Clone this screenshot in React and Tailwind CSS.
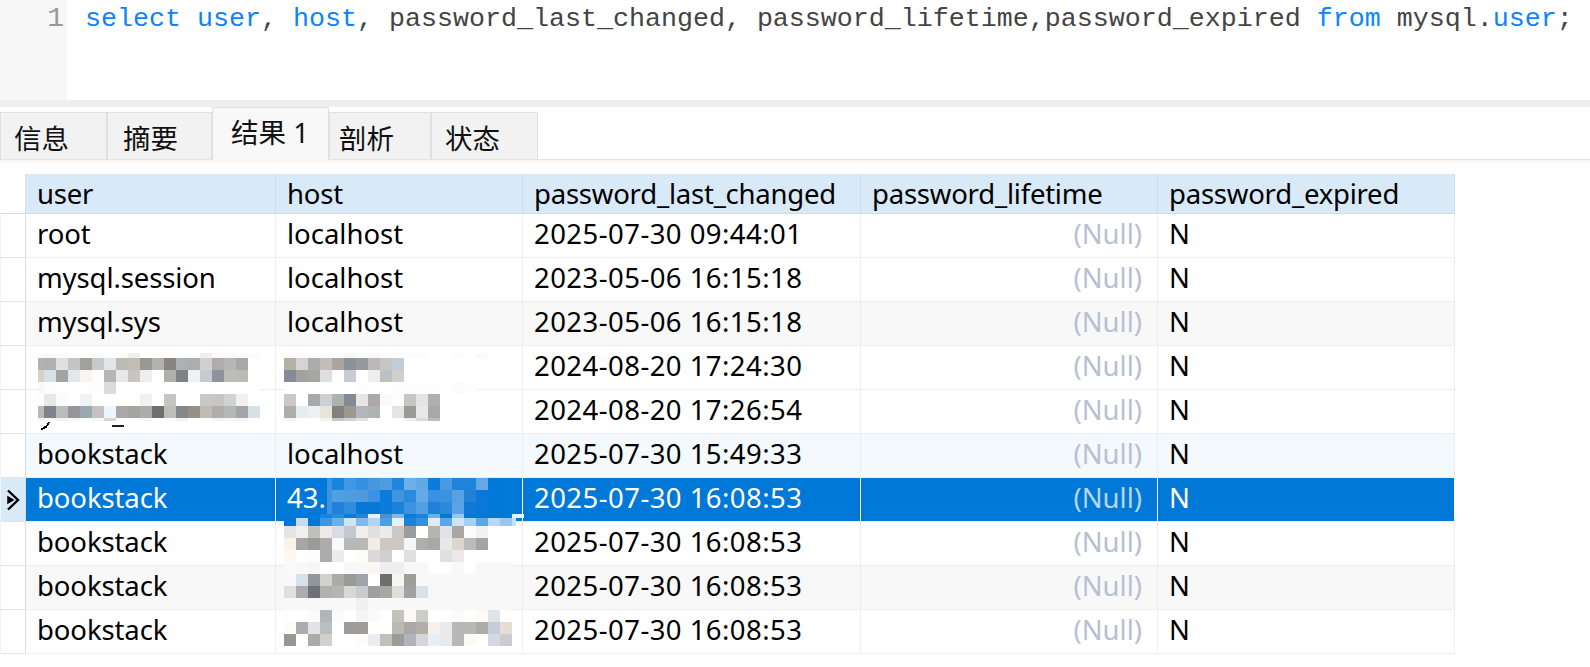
import React from 'react';

const COLS = ['w-[250px]', 'w-[247px]', 'w-[338px]', 'w-[297px]', 'w-[297px]'];
const HEAD = ['user', 'host', 'password_last_changed', 'password_lifetime', 'password_expired'];

const ROWS = [
    { user: 'root', host: 'localhost', time: '2025-07-30 09:44:01', bg: 'bg-white' },
    { user: 'mysql.session', host: 'localhost', time: '2023-05-06 16:15:18', bg: 'bg-white' },
    { user: 'mysql.sys', host: 'localhost', time: '2023-05-06 16:15:18', bg: 'bg-[#f8f8f8]' },
    { user: '', host: '', time: '2024-08-20 17:24:30', bg: 'bg-white' },
    { user: '', host: '', time: '2024-08-20 17:26:54', bg: 'bg-white' },
    { user: 'bookstack', host: 'localhost', time: '2025-07-30 15:49:33', bg: 'bg-[#f4f9fe]' },
    { user: 'bookstack', host: '43.', time: '2025-07-30 16:08:53', selected: true },
    { user: 'bookstack', host: '', time: '2025-07-30 16:08:53', bg: 'bg-white' },
    { user: 'bookstack', host: '', time: '2025-07-30 16:08:53', bg: 'bg-[#f8f8f8]' },
    { user: 'bookstack', host: '', time: '2025-07-30 16:08:53', bg: 'bg-white' },
];

const TABS = [
    { label: '信息', w: 'w-[107px] pl-[13px]' },
    { label: '摘要', w: 'w-[105px] pl-[15px]' },
    { label: '结果 1', w: 'w-[117px] pl-[18px]', active: true },
    { label: '剖析', w: 'w-[102px] pl-[9px]' },
    { label: '状态', w: 'w-[107px] pl-[13px]' },
];

// blurred-out parts of the screenshot: [x, y, h, colours, width of first cell]
const W = 'ffffff';
const BLUR = [
    [38, 353, 5, ['fbfbfb', 'f8f8f8', 'fbfbfb', W, W, 'fbfbfb', W, W, 'eef0ee', W, W, W, W, W, 'f0f0f0', 'fbfbfb', 'fbfbfb', 'fbfbfb', 'fbfbfb'], 6],
    [38, 358, 12, ['b3b4b2', 'adb1b2', 'e0e0e0', 'c3c4c6', 'a0a19b', 'c8c9cb', 'e2e6ea', 'bcbbb5', 'c4bcb2', '979993', 'b3b1b2', '888480', 'adb1b5', 'adadad', 'd0d0d0', 'b0acac', 'b5b7b4', 'a8a8a6', W], 6],
    [38, 370, 12, ['d9d0c8', 'd8e0e8', 'a0a4a4', 'e4e6e9', 'f6f5f2', 'fdfdfd', 'b4b6b8', 'e8e8e8', 'c8c4c0', 'eeeeee', W, 'b2b0ac', '7f8184', 'f0f1f3', 'c4ccd2', '8f9298', 'bdbdb8', 'bcbab6', W], 6],
    [38, 382, 12, ['f8f8f8', 'fdfdfd', W, 'fefefe', 'fefefe', 'fdfdfd', 'dcdbd9', 'fefefe', 'fefefe', 'fefefe', 'fefefe', 'fefefe', 'fefefe', 'fefefe', 'fefefe', 'fefefe', 'fefefe', 'fefefe', W], 6],
    [38, 394, 12, [W, 'e8e8e4', 'fbfbfb', W, 'f2f2f2', W, W, W, W, 'f1f1f1', W, 'c4c4c0', W, W, 'c8c8c8', 'c6c6c6', 'd0d2d0', 'f2f0ee', W], 6],
    [38, 406, 12, ['bcb8b4', '7f838c', 'bcbcbc', '96969c', '9aa8b0', 'c4c2c2', 'eef6fd', 'a8a8a8', 'a6a4a0', 'acaca8', '706e6e', 'bcbebb', '85878b', '989088', 'c0bcb4', 'b0aeac', 'b4b8b6', 'a4a4aa', 'd8e0e8'], 6],
    [38, 418, 3, ['f4f4f4', 'f8f8f8', 'f8f0f4', 'f8f8f8', W, 'f4f8f4', 'd8d8d8', W, W, 'f4f8f4', W, W, 'f8f0f4', W, W, 'f8f0f4', 'f4f8f4', 'f4f4f8', W], 6],

    [284, 353, 5, ['fcfcfc', 'fcfcfc', 'fcfcfc', 'fcfcfc', 'fcfcfc', 'f8f8f8', 'fcfcfc', 'f8f8f8', W, 'fcfcfc', 'fcfcfc', 'fcfcfc', W, W, 'fcfcfc', W, 'fafafa']],
    [284, 358, 12, ['b4b0a4', 'd4d4d2', 'acacac', 'c4bcb6', 'aca49e', '8e9296', '969a9e', 'bcb8b6', 'c8c6c4', 'c0ccd6']],
    [284, 370, 12, ['848c96', 'a0a2a4', 'a8a6a2', 'dde0de', W, 'c8ccd2', W, 'f0eeec', 'bcc2c2', 'd0cfcb']],
    [284, 382, 12, ['fefefe', 'fefefe', 'fefefe', 'fefefe', 'fefefe', W, 'fdfdfd', 'fefefe', 'fefefe', 'fdfdfd', 'fdfdfd', 'fdfdfd', 'fdfdfd', W, 'fcfcfc', 'fdfdfd']],
    [284, 394, 12, ['ccc8c4', W, 'a6a8ac', 'ccd0d4', 'aeb2ae', '848a94', 'e8e6e4', 'aca8a6', 'f8fafc', 'fcffff', 'c8c6c4', 'e4e4e4', 'aeb0b0']],
    [284, 406, 12, ['b0aca8', 'e4ecf4', 'f0f0f0', 'e4e6dc', '84807c', '9c9890', 'b4b4bc', 'b0b4b2', W, 'e4e4e0', '9c9a96', 'e8e8e8', 'a8a8a8']],
    [284, 418, 3, ['f4f4f4', W, W, 'f4f4f0', 'c8c4c8', 'd8d0d8', 'e0e0e4', W, W, W, 'f0f0e8', 'e0d8e0', 'bcbcbc']],

    [327, 478, 12, ['3d93e0', '1a84dc', '4097e3', '3590e2', '4697e0', '509ce2', '1f86dc', '6cb0ea', '60a8e8', '0a7ddb', '4a9ae2', '1f85dc', '1f85dc', '64a8e6'], 5],
    [327, 490, 12, ['3d93e0', '4f9fe5', '4f9ce3', '4c9ae2', '3a92e0', '0a7ddb', '3f95e2', '2a8ade', '62aaea', '3892e0', '3a93e0', '55a2e6', '2480d4', '0a78d8'], 5],
    [327, 502, 12, ['3d93e0', '2080dc', '308ce0', '0578d8', '0678d8', '0c7cd9', '1a82da', '3a92e0', '52a0e4', '2080dc', '2a8ade', '5aa4e6', '1278d8', '0a78d8'], 5],
    [320, 514, 4, ['1a84dc', '2a8ade', '0a7ddb', '1f86dc', 'e8f2fb', '3f95e2', '80b8ec', '0a7ddb', '1a84dc', '70b0ea', '0078d7', '9ac6ee', '0078d7', '0078d7', '0078d7', '0078d7', 'e8f2fb']],
    [284, 518, 8, ['0078d7', 'c4def5', '0078d7', '3d96e3', '6cb0ea', 'd0e4f6', '80b8ec', 'b4d4f2', '509fe4', 'e4f0fa', '1a82da', '3490e0', 'e0ecf8', '5ca6e6', 'cfe3f6', 'a8cef2', '5ca6e6', 'b8d8f4', '9ac6ee']],
    [512, 518, 8, ['c8e0f6'], 4],
    [284, 526, 12, ['e4e4e4', 'f0f0f0', 'c0c0bc', 'ecebe8', 'dcdce0', 'c2c8d2', 'f2f0ee', 'e0e0e0', 'ececee', 'ccc8c4', '9c9c9e', W, 'b4b4b0', 'e0e4e6', 'aaa6a4', 'fbfbfb', 'f2f2f4', W, W]],
    [284, 538, 12, ['fcf2e8', 'a8a6a4', '9c9a9a', 'aeacaa', 'f8fafc', 'b8b8b8', 'b8b8b8', 'f0ece6', 'd0c8c0', 'ccc8c2', 'f2f6f6', 'aeaeaa', 'a8a8a4', 'e8e8e6', 'dcd6ce', 'b8bcbe', 'a8a4a2', W, W]],
    [284, 550, 12, ['fef8f2', 'fefefe', 'fdfdfd', 'acacac', 'ececee', W, 'fdfbf6', 'dcdad6', 'd0d0d2', W, 'e0e0e0', W, W, 'e0e0e2', 'ece8ea', W, W, W, W]],
    [284, 562, 12, ['fafafa', 'f8f8f8', 'f6f6f6', W, W, 'f8f8f8', 'f8f8f8', 'f8f8f0', 'eeeeee', 'eeeeee', 'f8f8f8', 'f8f8f8', W, W, 'f8f8f8', W, 'f8f8f8', 'f8f8f8', 'f8f8f8']],
    [284, 574, 12, ['f8f8f8', 'd8e2ec', '90969a', 'd4d0cc', 'a8acaa', '9c9a96', 'a0a4a8', W, '6e6e6e', 'f6f5f2', 'a09e9a', 'f8f8f8', 'f8f8f8', 'f8f8f8', 'f8f8f8', 'f8f8f8', 'f8f8f8', 'f8f8f8', 'f8f8f8']],
    [284, 586, 12, ['e0e0e0', 'acacb0', '6e7276', 'b0b0ac', 'b8b4b0', 'd8d8d8', 'c8cccc', '9ca0a2', 'aaa6a2', 'dededa', 'a0a2a6', 'dce2ec', 'f8f8f8', 'f8f8f8', 'f8f8f8', 'f8f8f8', 'f8f8f8', 'f8f8f8', 'f8f8f8']],
    [284, 598, 12, ['f8f8f8', 'f8f8f8', 'f8f8f8', 'f8f8f8', 'f8f8f8', 'f8f8f8', 'f0f0f0', 'f8f8f8', 'f8f8f8', 'f8f8f8', 'f8f8f8', 'f8f8f8', 'f8f8f8', 'f8f8f8', 'f8f8f8', 'f8f8f8', 'f8f8f8', 'f8f8f8', 'f8f8f8']],
    [284, 610, 12, [W, W, 'fbfbfb', 'b0b6b6', 'fbfbfb', W, 'f5f5f5', 'fafafa', W, 'c4c2bc', 'fcfaf6', 'ccccca', W, W, 'fbfbfb', W, 'fdfbf8', 'e0e4e6', W]],
    [284, 622, 12, ['fdfaf7', 'acacac', 'e0e4e4', 'b8bec2', W, '9c9c9a', 'a09c98', W, W, 'bcb8b2', 'a8a8a8', 'b4aea8', 'f4f0ee', 'e8eaec', 'b8b8b8', 'b8b8b8', 'acaca8', 'c8ccd8', 'e6ded4']],
    [284, 634, 12, ['9a9692', W, 'acaaa6', 'd0d0cc', W, W, 'fcfcfc', 'e8eef4', 'c0c0ba', '9c9c98', 'b0b4bc', 'd4d6da', 'e6eef6', 'eaeaec', 'b8b8b8', 'fef9f2', W, 'd4d8e4', 'ccccd0']],
];

const Cell = ({ className, children }) => (
    <div className={`shrink-0 h-full flex items-center pl-[11px] pr-[15px] border-r whitespace-nowrap ${className}`}>
        {children}
    </div>
);

const DataRow = ({ row }) => {
    const line = row.selected ? 'border-white' : 'border-[#eeeeee]';
    const text = row.selected ? 'text-white' : 'text-black';
    return (
        <div className="flex h-[44px]">
            <div className={`w-[26px] shrink-0 border-b border-l border-r border-l-[#f2f2f2] border-b-[#e4e4e4] border-r-[#dddddd] flex items-center justify-center ${row.selected ? 'bg-[#d8e9f7]' : 'bg-white'}`}>
                {row.selected && (
                    <svg width="16" height="24" viewBox="0 0 16 24">
                        <path d="M3 9l5 3-5 3z" fill="#000" stroke="#000" strokeWidth="1.5" />
                        <path d="M3 2.5 13 12 3 21.5" fill="none" stroke="#000" strokeWidth="2.4" />
                    </svg>
                )}
            </div>
            <div className={`flex border-b border-[#eeeeee] ${row.selected ? 'bg-[#0078d7]' : row.bg}`}>
                <Cell className={`${COLS[0]} ${line} ${text} pb-[3px] tracking-[-0.1px]`}>{row.user}</Cell>
                <Cell className={`${COLS[1]} ${line} ${text} pb-[3px]`}>{row.host}</Cell>
                <Cell className={`${COLS[2]} ${line} ${text} pb-[3px] tracking-[0.45px]`}>{row.time}</Cell>
                <Cell className={`${COLS[3]} ${line} pb-[3px] justify-end ${row.selected ? 'text-[#b9d4ef]' : 'text-[#b8c0d4]'}`}>(Null)</Cell>
                <Cell className={`${COLS[4]} ${line} ${text} pb-[3px]`}>N</Cell>
            </div>
        </div>
    );
};

const App = () => {
    return (
        <div className="relative w-[1590px] h-[667px] overflow-hidden bg-white font-['Noto_Sans','Noto_Sans_CJK_SC',sans-serif] text-[27.5px]">
            {/* query editor */}
            <div className="flex h-[100px]">
                <div className="w-[67px] shrink-0 bg-[#f7f7f7] pr-[3px] pt-[2px] text-right font-['Liberation_Mono',monospace] text-[28px] leading-[34px] text-[#999999]">1</div>
                <div className="pl-[18px] pt-[2px] font-['Liberation_Mono',monospace] text-[26.67px] leading-[34px] text-[#444444] whitespace-pre">
                    <span className="text-[#0a84ff]">select user</span>, <span className="text-[#0a84ff]">host</span>, password_last_changed, password_lifetime,password_expired <span className="text-[#0a84ff]">from</span> mysql.<span className="text-[#0a84ff]">user</span>;
                </div>
            </div>
            <div className="h-[7px] bg-[#efefef]" />

            {/* tabs */}
            <div className="flex items-end h-[53px] border-b border-[#e4e4e4]">
                {TABS.map((tab) => (
                    <div
                        key={tab.label}
                        className={`${tab.w} flex items-center border-r border-l border-t border-[#e0e0e0] text-[#111111] whitespace-nowrap ${tab.active ? 'h-[53px] -mb-px pb-[3px] bg-[#f8f8f8] rounded-t-[2px]' : 'h-[47px] pt-[6px] bg-[#f2f2f2]'}`}
                    >
                        {tab.label}
                    </div>
                ))}
            </div>
            <div className="h-[3px] bg-[#f8f8f8]" />

            {/* result grid */}
            <div className="pt-[11px]">
                <div className="flex h-[40px]">
                    <div className="w-[26px] shrink-0 border-r border-b border-[#dddddd]" />
                    <div className="flex bg-[#d8e9f7] border-b border-[#cfdde8]">
                        {HEAD.map((name, i) => (
                            <Cell key={name} className={`${COLS[i]} border-[#cfdde8] text-black tracking-[-0.22px]`}>{name}</Cell>
                        ))}
                    </div>
                </div>
                {ROWS.map((row, i) => (
                    <DataRow key={i} row={row} />
                ))}
            </div>

            {/* pixelated patches over the hidden values */}
            <svg className="absolute inset-0 pointer-events-none" width="1590" height="667" shapeRendering="crispEdges">
                {BLUR.map(([x, y, h, colours, first = 12]) =>
                    colours.map((c, i) => (
                        <rect
                            key={`${x}-${y}-${i}`}
                            x={i === 0 ? x : x + first + (i - 1) * 12}
                            y={y}
                            width={i === 0 ? first : 12}
                            height={h}
                            fill={`#${c}`}
                        />
                    ))
                )}
                <path d="M49 422q-2 6-8 7" fill="none" stroke="#000" strokeWidth="2" />
                <rect x="112" y="425" width="12" height="2" fill="#222" />
            </svg>
        </div>
    );
};

export default App;
